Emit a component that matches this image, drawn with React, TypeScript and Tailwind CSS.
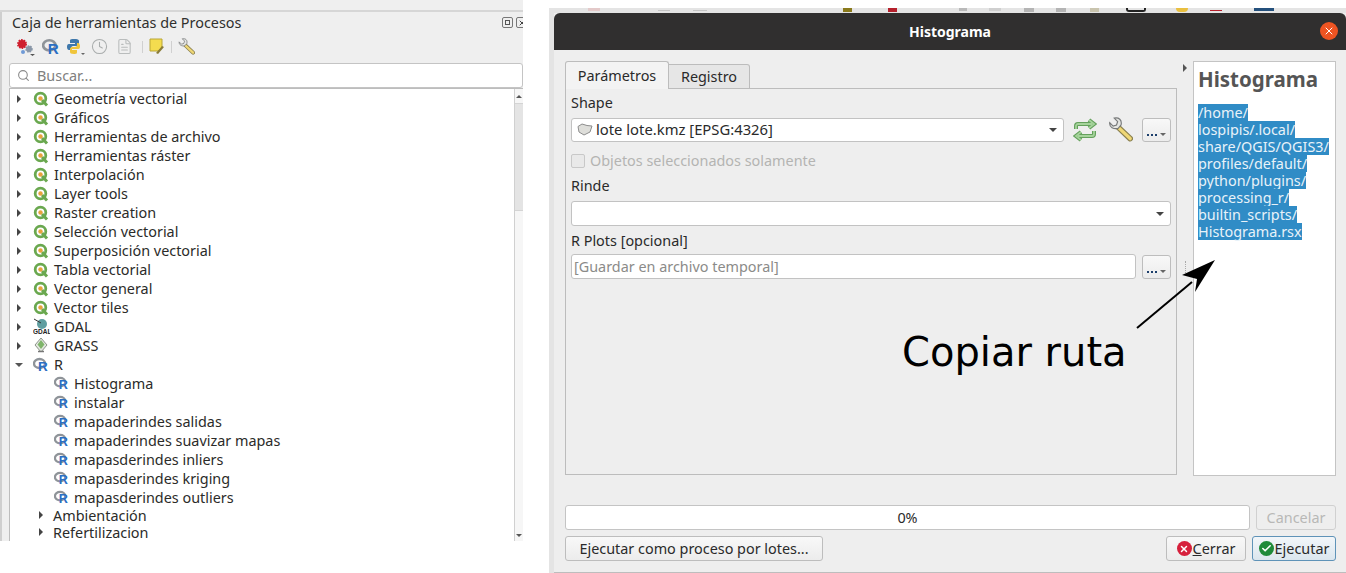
import { Clock, FileText, Search, X, Check } from 'lucide-react';

const qgisGroups = [
  'Geometría vectorial',
  'Gráficos',
  'Herramientas de archivo',
  'Herramientas ráster',
  'Interpolación',
  'Layer tools',
  'Raster creation',
  'Selección vectorial',
  'Superposición vectorial',
  'Tabla vectorial',
  'Vector general',
  'Vector tiles',
];

const rScripts = [
  'Histograma',
  'instalar',
  'mapaderindes salidas',
  'mapaderindes suavizar mapas',
  'mapasderindes inliers',
  'mapasderindes kriging',
  'mapasderindes outliers',
];

const pathLines = ['/home/', 'lospipis/.local/', 'share/QGIS/QGIS3/', 'profiles/default/', 'python/plugins/', 'processing_r/', 'builtin_scripts/', 'Histograma.rsx'];

function QgisIcon() {
  return (
    <svg width="16" height="16" viewBox="0 0 16 16" className="shrink-0">
      <circle cx="7.500" cy="7.500" r="5.300" fill="none" stroke="#6aa84f" strokeWidth="2.800" />
      <path d="M9 9l5 5.500" stroke="#6aa84f" strokeWidth="3" />
      <circle cx="7.500" cy="7.500" r="2.200" fill="#e8a33d" />
    </svg>
  );
}

function RIcon({ size = 16 }: { size?: number }) {
  return (
    <svg width={size} height={size} viewBox="0 0 16 16" className="shrink-0">
      <ellipse cx="6.500" cy="6.500" rx="5.500" ry="4.500" fill="none" stroke="#8f9499" strokeWidth="2.400" />
      <text x="5" y="14" fontSize="13.500" fontWeight="700" fontFamily="Liberation Sans, sans-serif" fill="#2a6ec4">R</text>
    </svg>
  );
}

function GdalIcon() {
  return (
    <svg width="17" height="17" viewBox="0 0 17 17" className="shrink-0">
      <circle cx="9" cy="6" r="5" fill="#5f9ea0" />
      <path d="M1 1l7 4" stroke="#333" strokeWidth="1" />
      <text x="0" y="15.500" fontSize="6.500" fontWeight="700" fontFamily="Liberation Sans, sans-serif" fill="#222">GDAL</text>
    </svg>
  );
}

function GrassIcon() {
  return (
    <svg width="16" height="17" viewBox="0 0 16 17" className="shrink-0">
      <path d="M8 1l6 7-6 7-6-7z" fill="#e3e7e0" stroke="#8b9488" />
      <path d="M8 3l3.500 4.500L8 12 4.500 7.500z" fill="#7fb56a" />
      <path d="M5 14.500h6" stroke="#777" strokeWidth="1.500" />
    </svg>
  );
}

function Arrow({ open = false }: { open?: boolean }) {
  return open ? (
    <span className="w-0 h-0 border-x-[4px] border-x-transparent border-t-[4px] border-t-[#555] shrink-0" />
  ) : (
    <span className="w-0 h-0 border-y-[4px] border-y-transparent border-l-[4px] border-l-[#444] shrink-0" />
  );
}

function TreeRow({ icon, label, open }: { icon: React.ReactNode; label: string; open?: boolean }) {
  return (
    <div className="h-[19px] flex items-center">
      <span className="w-[14px] ml-[2px] flex justify-center items-center">
        <Arrow open={open} />
      </span>
      <span className="ml-[7px] w-[21px] flex items-center">{icon}</span>
      <span>{label}</span>
    </div>
  );
}

function Wrench({ size = 22 }: { size?: number }) {
  return (
    <svg width={size} height={size} viewBox="0 0 22 22" className="shrink-0">
      <path d="M9 9L19.500 19" stroke="#8a8050" strokeWidth="5" strokeLinecap="round" />
      <path d="M10 10l9.500 9" stroke="#efd775" strokeWidth="3" strokeLinecap="round" />
      <path d="M1.500 5l3 3 3-1 1-3-3-3c4-.8 7 1.500 6 6l-2.500 3C5 11 1 9 1.500 5z" fill="#e4e5e2" stroke="#77797a" strokeWidth="1" />
    </svg>
  );
}

function MoreButton() {
  return (
    <div className="w-[29px] h-[24px] shrink-0 rounded-[3px] border border-[#bdbdbd] bg-gradient-to-b from-[#f8f8f8] to-[#ececec] flex items-end justify-center pb-[5px] gap-[2px]">
      <span className="w-[2px] h-[2px] bg-[#1c3f6c]" />
      <span className="w-[2px] h-[2px] bg-[#1c3f6c]" />
      <span className="w-[2px] h-[2px] bg-[#1c3f6c]" />
      <span className="w-0 h-0 ml-[1px] border-x-[3px] border-x-transparent border-t-[3px] border-t-[#666]" />
    </div>
  );
}

function ComboArrow() {
  return <span className="w-0 h-0 border-x-[4px] border-x-transparent border-t-[4px] border-t-[#444]" />;
}

function RefreshIcon() {
  const paths = ['M16 2l5 4-5 4', 'M3 11V8a2 2 0 0 1 2-2h14', 'M8 22l-5-4 5-4', 'M21 13v3a2 2 0 0 1-2 2H5'];
  return (
    <svg width="24" height="24" viewBox="0 0 24 24" fill="none" className="ml-[9px] shrink-0">
      {paths.map((d) => (
        <path key={d} d={d} stroke="#64a05c" strokeWidth="4" />
      ))}
      {paths.map((d) => (
        <path key={d} d={d} stroke="#a5d39b" strokeWidth="1.800" />
      ))}
    </svg>
  );
}

export default function App() {
  return (
    <div className="w-[1346px] h-[573px] bg-white overflow-hidden relative flex items-start font-['Noto_Sans',sans-serif] text-[#2e3436]">
      {/* Caja de herramientas */}
      <div className="w-[523px] h-[541px] shrink-0 flex flex-col bg-[#efefef]">
        <div className="h-[12px] border-b-2 border-[#d6d6d6] shrink-0" />
        <div className="flex-1 min-h-0 flex flex-col border-l-2 border-[#cfcfcf]">
          <div className="h-[21px] flex items-center justify-between pl-[10px] text-[14.400px] text-[#30302e]">
            <span>Caja de herramientas de Procesos</span>
            <span className="flex gap-[3px] items-center overflow-hidden w-[21px]">
              <span className="w-[11px] h-[11px] shrink-0 rounded-[2px] border border-[#777] flex items-center justify-center">
                <span className="w-[5px] h-[5px] border border-[#555]" />
              </span>
              <span className="w-[11px] h-[11px] shrink-0 rounded-[2px] border border-[#777] flex items-center justify-center">
                <X size={8} strokeWidth={3} color="#444" />
              </span>
            </span>
          </div>
          <div className="h-[27px] flex items-center pl-[14px] gap-[6px]">
            <svg width="20" height="18" viewBox="0 0 20 18" className="shrink-0">
              <circle cx="6" cy="6" r="4" fill="#cf1f2e" stroke="#cf1f2e" strokeWidth="2" strokeDasharray="1.500 1" />
              <circle cx="13" cy="11" r="3" fill="#8a97a8" stroke="#8a97a8" strokeWidth="1.500" strokeDasharray="1.500 1" />
              <circle cx="7" cy="14" r="2" fill="#6f9ad6" />
              <path d="M14 16h5l-2.500 2z" fill="#555" />
            </svg>
            <RIcon size={18} />
            <svg width="19" height="18" viewBox="0 0 19 18" className="shrink-0">
              <path d="M7 1c-3 0-3 1-3 2v2h5v1H3C1 6 1 8 1 9s.5 3 2 3h2v-2c0-1 1-2 2-2h4c1 0 2-1 2-2V3c0-1-1-2-3-2z" fill="#3f78ab" />
              <path d="M8 16c3 0 3-1 3-2v-2H6v-1h6c2 0 2-2 2-3s-.5-3-2-3h-1v2c0 1-1 2-2 2H6c-1 0-2 1-2 2v3c0 1 1 2 4 2z" fill="#f0c53b" />
              <path d="M15 15h4l-2 2z" fill="#666" />
            </svg>
            <Clock size={17} color="#a9adad" strokeWidth={1.500} className="shrink-0" />
            <FileText size={17} color="#b9bcbc" strokeWidth={1.500} className="shrink-0 ml-[2px]" />
            <span className="w-px h-[12px] bg-[#d0d0d0] ml-[3px]" />
            <svg width="16" height="17" viewBox="0 0 16 17" className="shrink-0">
              <path d="M1 1h12v9l-4 3H1z" fill="#f4dc4f" stroke="#b9a636" />
              <path d="M7 15l6-7 2 1-6 7z" fill="#8a7c38" />
            </svg>
            <span className="w-px h-[12px] bg-[#d0d0d0]" />
            <Wrench size={17} />
          </div>
          <div className="h-[25px] mt-[3px] ml-[7px] bg-white border border-[#c4c4c4] rounded-[3px] flex items-center pl-[7px] gap-[7px] text-[14.400px] text-[#80807e] shrink-0">
            <Search size={13} color="#8a8a8a" />
            <span>Buscar...</span>
          </div>
          {/* Arbol */}
          <div className="flex-1 min-h-0 ml-[7px] flex bg-white border-t border-[#bdbdbd] border-l overflow-hidden">
            <div className="flex-1 text-[14.400px] text-[#2b2b29] leading-[19px]">
              {qgisGroups.map((g) => (
                <TreeRow key={g} icon={<QgisIcon />} label={g} />
              ))}
              <TreeRow icon={<GdalIcon />} label="GDAL" />
              <TreeRow icon={<GrassIcon />} label="GRASS" />
              <TreeRow icon={<RIcon />} label="R" open />
              {rScripts.map((s) => (
                <div key={s} className="h-[19px] flex items-center pl-[44px] gap-[5px]">
                  <RIcon size={15} />
                  <span>{s}</span>
                </div>
              ))}
              <div className="h-[16px] flex items-center pl-[29px] gap-[10px]">
                <Arrow />
                <span>Ambientación</span>
              </div>
              <div className="h-[18px] flex items-center pl-[29px] gap-[10px]">
                <Arrow />
                <span>Refertilizacion</span>
              </div>
            </div>
            <div className="w-[9px] shrink-0 border-l border-[#d0d0d0] bg-[#f6f6f6] flex flex-col items-center">
              <div className="h-[14px] w-full flex justify-center items-center">
                <span className="w-0 h-0 border-x-[3px] border-x-transparent border-b-[3px] border-b-[#555]" />
              </div>
              <div className="h-[108px] w-full bg-[#e4e4e4] border-y border-[#d4d4d4]" />
              <div className="flex-1" />
              <div className="h-[12px] w-full flex justify-center items-center">
                <span className="w-0 h-0 border-x-[3px] border-x-transparent border-t-[3px] border-t-[#555]" />
              </div>
            </div>
          </div>
        </div>
      </div>

      {/* Dialogo Histograma */}
      <div className="ml-[26px] mt-[8px] w-[797px] h-[565px] shrink-0 bg-[#e4e4e4] flex flex-col">
        {/* restos de la barra de QGIS */}
        <div className="h-[5px] shrink-0 flex items-start overflow-hidden">
          <span className="ml-[39px] w-[12px] h-[3px] bg-[#e3c9c9]" />
          <span className="ml-[58px] w-[12px] h-[3px] border-b border-[#c4c4c4]" />
          <span className="ml-[23px] w-[14px] h-[3px] border-b border-[#c4c4c4]" />
          <span className="ml-[136px] w-[9px] h-[4px] bg-[#8a7a1c]" />
          <span className="ml-[36px] w-[9px] h-[4px] bg-[#b5202c]" />
          <span className="ml-[62px] w-[8px] h-[3px] bg-[#b9b9b9]" />
          <span className="ml-[22px] w-[12px] h-[3px] bg-[#cfcfcf]" />
          <span className="ml-[23px] w-[10px] h-[4px] bg-[#b4b4b4]" />
          <span className="ml-[22px] w-[10px] h-[4px] bg-[#b4b4b4]" />
          <span className="ml-[24px] w-[9px] h-[4px] bg-[#c9c4ae]" />
          <span className="ml-[27px] w-[20px] h-[4px] border-b-2 border-x-2 border-[#222] rounded-b-[3px]" />
          <span className="ml-[30px] w-[12px] h-[4px] bg-[#e9bf3f] rounded-b-full" />
          <span className="ml-[22px] w-[12px] h-[3px] border-b border-[#b5202c]" />
          <span className="ml-[32px] w-[20px] h-[3px] bg-[#24507c]" />
        </div>
        <div className="flex-1 min-h-0 ml-[5px] flex flex-col bg-[#eeeeee] border-b border-[#bdbdbd] overflow-hidden">
          <div className="h-[37px] shrink-0 bg-[#302f2f] rounded-t-[6px] flex items-center justify-center relative text-white font-bold text-[14px]">
            <span>Histograma</span>
            <span className="absolute right-[8px] top-[9px] w-[18px] h-[18px] rounded-full bg-[#ee5422] flex items-center justify-center">
              <X size={12} color="white" strokeWidth={2} />
            </span>
          </div>

          <div className="flex-1 min-h-0 flex px-[11px] pt-[11px] text-[14.400px]">
            {/* Parametros */}
            <div className="w-[612px] shrink-0 flex flex-col">
              <div className="flex items-end h-[28px] shrink-0 -mb-px">
                <div className="w-[104px] h-[28px] bg-[#f3f3f3] border border-b-0 border-[#bcbcbc] rounded-t-[3px] flex items-center justify-center text-[#2a2a2a] z-10">
                  Parámetros
                </div>
                <div className="w-[81px] h-[25px] bg-[#e6e6e6] border border-l-0 border-[#bcbcbc] rounded-tr-[3px] flex items-center justify-center text-[#2a2a2a]">
                  Registro
                </div>
              </div>
              <div className="h-[387px] border border-[#bcbcbc] px-[5px] bg-[#eeeeee]">
                <div className="h-[27px] flex items-center text-[#2a2a2a]">Shape</div>
                <div className="h-[27px] flex items-center">
                  <div className="w-[493px] h-[24px] rounded-[3px] border border-[#c2c2c2] bg-white flex items-center pl-[5px] pr-[6px] gap-[3px] text-[#2a2a2a]">
                    <svg width="16" height="13" viewBox="0 0 16 13">
                      <path d="M1 3.500l4-2.500 5 1.500 5 .5-2 6-6 3-5-3z" fill="#dededa" stroke="#8d8d8d" />
                    </svg>
                    <span className="flex-1 text-[14.800px]">lote lote.kmz [EPSG:4326]</span>
                    <ComboArrow />
                  </div>
                  <RefreshIcon />
                  <span className="ml-[11px]">
                    <Wrench size={25} />
                  </span>
                  <span className="ml-[9px]">
                    <MoreButton />
                  </span>
                </div>
                <div className="h-[36px] flex items-center gap-[5px] text-[#b4b4b2]">
                  <span className="w-[14px] h-[14px] border border-[#c8c8c8] bg-[#e9e9e9] rounded-[2px]" />
                  <span>Objetos seleccionados solamente</span>
                </div>
                <div className="h-[13px] flex items-center text-[#2a2a2a]">Rinde</div>
                <div className="mt-[9px] h-[25px] rounded-[3px] border border-[#c2c2c2] bg-white flex items-center justify-end pr-[6px]">
                  <ComboArrow />
                </div>
                <div className="h-[28px] pt-[2px] flex items-center text-[#2a2a2a]">R Plots [opcional]</div>
                <div className="h-[25px] flex items-center gap-[6px]">
                  <div className="w-[565px] h-[25px] rounded-[3px] border border-[#c2c2c2] bg-white flex items-center pl-[2px] text-[#8b8b89]">
                    [Guardar en archivo temporal]
                  </div>
                  <MoreButton />
                </div>
              </div>
            </div>

            {/* Splitter */}
            <div className="w-[16px] shrink-0 flex flex-col items-center pt-[3px]">
              <span className="h-0 w-0 border-y-[4px] border-y-transparent border-l-[4px] border-l-[#555]" />
              <span className="mt-[189px] h-[12px] border-l border-dotted border-[#aaa]" />
            </div>

            {/* Ayuda */}
            <div className="w-[143px] h-[415px] shrink-0 bg-white border border-[#c4c4c4] pl-[4px] pt-[2px]">
              <div className="text-[20.500px] font-bold text-[#555] leading-[30px]">Histograma</div>
              <div className="mt-[10px] leading-[17px]">
                {pathLines.map((l) => (
                  <div key={l}>
                    <span className="bg-[#308cc6] text-[#e8f2f9] inline-block">{l}</span>
                  </div>
                ))}
              </div>
            </div>
          </div>

          {/* Barra de progreso */}
          <div className="pl-[11px] pr-[10px] flex gap-[6px] shrink-0 text-[14.400px]">
            <div className="flex-1 h-[25px] rounded-[3px] border border-[#c4c4c4] bg-white flex items-center justify-center text-[#2a2a2a]">0%</div>
            <div className="w-[80px] h-[25px] rounded-[3px] border border-[#d0d0d0] flex items-center justify-center text-[#b8b8b6]">Cancelar</div>
          </div>

          {/* Botones */}
          <div className="mt-[6px] mb-[11px] pl-[11px] pr-[10px] flex items-center shrink-0 text-[14.400px] text-[#2a2a2a]">
            <div className="w-[258px] h-[25px] rounded-[3px] border border-[#bdbdbd] bg-gradient-to-b from-[#f8f8f8] to-[#ececec] flex items-center justify-center">
              Ejecutar como proceso por lotes...
            </div>
            <div className="ml-auto w-[80px] h-[25px] rounded-[3px] border border-[#bdbdbd] bg-gradient-to-b from-[#f8f8f8] to-[#ececec] flex items-center justify-center gap-[1px]">
              <span className="w-[15px] h-[15px] rounded-full bg-[#d6203c] flex items-center justify-center">
                <X size={10} color="white" strokeWidth={3.500} />
              </span>
              <span><u>C</u>errar</span>
            </div>
            <div className="ml-[6px] w-[84px] h-[25px] rounded-[3px] border border-[#5f93b8] bg-gradient-to-b from-[#f2f6f9] to-[#dbe6ee] flex items-center justify-center gap-[1px]">
              <span className="w-[15px] h-[15px] rounded-full bg-[#1f8a3a] flex items-center justify-center">
                <Check size={11} color="white" strokeWidth={3.500} />
              </span>
              <span>Ejecutar</span>
            </div>
          </div>
        </div>
      </div>

      {/* Anotacion */}
      <span className="absolute left-[902px] top-[326px] text-[40px] leading-[52px] text-black font-['DejaVu_Sans',sans-serif]">Copiar ruta</span>
      <svg width="90" height="80" viewBox="0 0 90 80" className="absolute left-[1130px] top-[255px]">
        <path d="M7 73L62 27" stroke="black" strokeWidth="2" />
        <path d="M85 5L52 20 67 24 65 37z" fill="black" />
      </svg>
    </div>
  );
}
